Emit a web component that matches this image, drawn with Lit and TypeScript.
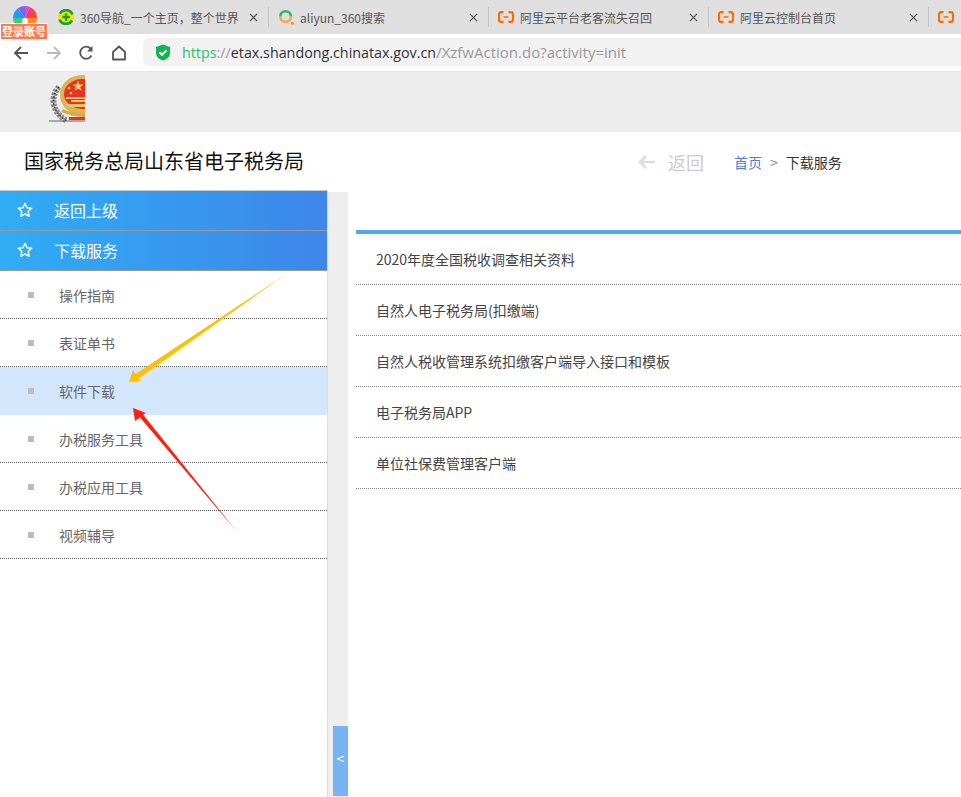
import { LitElement, html, css } from "lit";
import { customElement } from "lit/decorators.js";

const aliIcon = html`<svg class="fav" viewBox="0 0 16 16"><path d="M5.500 3.200H3.200C2 3.200 1 4.100 1 5.300v5.400c0 1.200 1 2.100 2.200 2.100h2.300M10.500 3.200h2.300c1.200 0 2.200.9 2.200 2.100v5.400c0 1.200-1 2.100-2.200 2.100h-2.300" fill="none" stroke="#ff6a00" stroke-width="2.200"/><path d="M5.500 8h5" stroke="#ff6a00" stroke-width="1.500"/></svg>`;
const closeIcon = html`<svg class="close" viewBox="0 0 10 10"><path d="M1 1l8 8M9 1L1 9" stroke="#555" stroke-width="1.400" fill="none"/></svg>`;
const star = html`<svg class="star" viewBox="0 0 16 16"><path d="M8 1.300l2 4.400 4.700.6-3.500 3.200.9 4.800L8 11.900l-4.100 2.400.9-4.800L1.300 6.300 6 5.700z" fill="none" stroke="#fff" stroke-width="1.400" stroke-linejoin="round"/></svg>`;

const tabs = [
  { icon: html`<svg class="fav" viewBox="0 0 16 16"><circle cx="8" cy="8" r="8" fill="#f7e200"/><path d="M2 4.500A7 7 0 0 1 14.500 5.500" fill="none" stroke="#12a048" stroke-width="2.600"/><path d="M14 11.500A7 7 0 0 1 1.500 10.500" fill="none" stroke="#12a048" stroke-width="2.600"/><path d="M8 4.200v7.600M4.200 8h7.600" stroke="#12a048" stroke-width="2.400"/></svg>`, text: "360导航_一个主页，整个世界" },
  { icon: html`<svg class="fav" viewBox="0 0 16 16"><path d="M2.300 7.500a5.300 5.300 0 0 1 10.600 0" fill="none" stroke="#2fb36a" stroke-width="2.600"/><path d="M12.900 7.500a5.300 5.300 0 0 1-10.600 0" fill="none" stroke="#f7a648" stroke-width="2.600"/><circle cx="14.300" cy="14.300" r="1.500" fill="#f58a1f"/></svg>`, text: "aliyun_360搜索" },
  { icon: aliIcon, text: "阿里云平台老客流失召回" },
  { icon: aliIcon, text: "阿里云控制台首页" },
  { icon: aliIcon, text: "" },
];

const menu = ["操作指南", "表证单书", "软件下载", "办税服务工具", "办税应用工具", "视频辅导"];
const links = ["2020年度全国税收调查相关资料", "自然人电子税务局(扣缴端)", "自然人税收管理系统扣缴客户端导入接口和模板", "电子税务局APP", "单位社保费管理客户端"];

@customElement("app-root")
export class AppRoot extends LitElement {
  static styles = css`
    :host { display: block; position: relative; width: 961px; height: 797px; overflow: hidden; background: #fff; font-family: "Noto Sans CJK SC", "Open Sans", sans-serif; }
    .strip { display: flex; height: 34px; background: #dfdfdf; padding-left: 48px; overflow: hidden; }
    .tab { flex: 0 0 220px; box-sizing: border-box; height: 34px; padding: 0 10px; display: flex; align-items: center; gap: 6px; font-size: 12px; color: #555; position: relative; }
    .tab + .tab::before { content: ""; position: absolute; left: 0; top: 7px; height: 20px; width: 1px; background: #c4c4c4; }
    .tab .label { flex: 1; white-space: nowrap; overflow: hidden; }
    .fav { width: 16px; height: 16px; flex: none; }
    .close { width: 9px; height: 9px; flex: none; }
    .bar { height: 37px; background: #fff; display: flex; align-items: center; border-bottom: 1px solid #e8e8e8; box-sizing: content-box; }
    .nav { display: flex; width: 143px; flex: none; box-sizing: border-box; padding-left: 13px; gap: 16.5px; }
    .nav svg { width: 16px; height: 16px; }
    .address { flex: 1; height: 28px; margin-top: -1px; background: #f2f2f2; border-radius: 6px 0 0 6px; display: flex; align-items: center; padding-left: 12px; gap: 11px; font: 15px/28px "Open Sans", sans-serif; white-space: nowrap; color: #999; }
    .address svg { width: 16px; height: 17px; }
    .scheme { color: #1fc26f; font-size: 14.3px; }
    .sep { color: #999; font-size: 14.3px; }
    .host-name { color: #333; font-size: 14.3px; }
    .logo-row { height: 60px; background: #ededed; display: flex; padding: 3px 0 0 49px; box-sizing: border-box; }
    .logo-row svg { width: 36px; height: 48px; }
    .title-row { height: 58px; display: flex; align-items: center; }
    .title { width: 637px; flex: none; box-sizing: border-box; padding: 0 0 2px 24px; font-size: 20px; color: #111; }
    .back { display: flex; align-items: center; gap: 13px; width: 97px; flex: none; font-size: 18px; color: #ccc; padding-top: 2px; box-sizing: border-box; }
    .back svg { width: 18px; height: 16px; }
    .crumbs { display: flex; font-size: 14px; gap: 8px; color: #333; padding-top: 2px; }
    .crumbs a { color: #4a7fdc; }
    .crumbs .gt { color: #888; }
    .main { display: flex; height: 607px; }
    .side { width: 328px; flex: none; box-sizing: border-box; border-right: 1px solid #ddd; }
    .head { height: 40px; display: flex; align-items: center; background: linear-gradient(90deg, #2fadf5, #3e86e8); color: #fff; font-size: 16px; padding: 0 0 2px 17px; gap: 21px; border-bottom: 1px solid #999; box-sizing: border-box; }
    .head:first-child { height: 41px; border-top: 1px solid #c6ccd6; }
    .star { width: 16px; height: 16px; flex: none; margin-top: 1px; }
    .item { height: 48px; box-sizing: border-box; display: flex; align-items: center; padding-left: 28px; gap: 25px; font-size: 14px; color: #666; border-bottom: 1px dotted #555; }
    .item.active { background: #d3e6fb; border-bottom: 0; }
    .bullet { width: 6px; height: 6px; background: #bdbdbd; flex: none; }
    .stripe { width: 20px; flex: none; background: #eee; margin-top: 2px; position: relative; }
    .toggle { position: absolute; left: 5px; right: 0; top: 534px; height: 70px; box-sizing: border-box; padding-bottom: 6px; background: #78b3f2; color: #fff; font-size: 14px; display: flex; align-items: center; justify-content: center; }
    .content { flex: 1; padding: 40px 0 0 8px; min-width: 0; }
    .list { border-top: 4px solid #4fa8f0; }
    .row { height: 51px; box-sizing: border-box; padding-left: 20px; display: flex; align-items: center; font-size: 14px; color: #444; border-bottom: 1px dotted #888; }
    .arrows { position: absolute; left: 0; top: 0; pointer-events: none; }
    .browser-logo { position: absolute; left: 13px; top: 6px; width: 24px; height: 24px; }
    .badge { position: absolute; left: 1px; top: 24px; width: 46px; height: 15px; box-sizing: border-box; background: #ff7a50; outline: 1px solid #fff; color: #fff; font-size: 11px; font-weight: 700; line-height: 15px; text-align: center; white-space: nowrap; }
  `;

  render() {
    return html`
      <div class="strip">
        ${tabs.map((t) => html`<div class="tab">${t.icon}<span class="label">${t.text}</span>${t.text ? closeIcon : ""}</div>`)}
      </div>
      <div class="bar">
        <div class="nav">
          <svg viewBox="0 0 16 16"><path d="M15 8H2M8 2L2 8l6 6" fill="none" stroke="#555" stroke-width="1.800"/></svg>
          <svg viewBox="0 0 16 16"><path d="M1 8h13M8 2l6 6-6 6" fill="none" stroke="#bbb" stroke-width="1.800"/></svg>
          <svg viewBox="0 0 16 16"><path d="M13.500 10.500A6 6 0 1 1 12.500 3.500" fill="none" stroke="#555" stroke-width="1.800"/><path d="M14.500 1v5.500H9z" fill="#555"/></svg>
          <svg viewBox="0 0 16 16"><path d="M2 14.500V7l6-5.500L14 7v7.500z" fill="none" stroke="#555" stroke-width="1.800" stroke-linejoin="round"/></svg>
        </div>
        <div class="address">
          <svg viewBox="0 0 16 17"><path d="M8 .5l7 2.500v6c0 4-3.200 6.500-7 7.500-3.800-1-7-3.500-7-7.500V3z" fill="#14b450"/><path d="M4.500 8.300l2.500 2.500 4.500-4.500" fill="none" stroke="#fff" stroke-width="2"/></svg>
          <span><span class="scheme">https</span><span class="sep">://</span><span class="host-name">etax.shandong.chinatax.gov.cn</span>/XzfwAction.do?activity=init</span>
        </div>
      </div>
      <div class="logo-row">
        <svg viewBox="0 0 36 48">
          <path d="M10 12C2 20 1 36 18 46" fill="none" stroke="#8a8a8a" stroke-width="6" stroke-dasharray="2.500 1.200"/>
          <path d="M10 12C2 20 1 36 18 46" fill="none" stroke="#2e2e2e" stroke-width="1.500" stroke-dasharray="1.500 2"/>
          <path d="M0 46h36" stroke="#666" stroke-width="1"/>
          <ellipse cx="33" cy="20" rx="22" ry="20" fill="#dcb552"/>
          <ellipse cx="33" cy="19" rx="18" ry="15" fill="#e8312a"/>
          <path d="M29 5.500l1.400 3.900h4.100l-3.300 2.500 1.200 3.900-3.400-2.400-3.400 2.400 1.200-3.900-3.300-2.500h4.100z" fill="#f8d860"/>
          <circle cx="20" cy="13" r="1.300" fill="#f8d860"/>
          <circle cx="22" cy="18" r="1.300" fill="#f8d860"/>
          <path d="M17 22h19v2H17zM22 25h14v2H22zM18 29h18v3H18z" fill="#ecc768"/>
          <path d="M14 34c6 3 14 4 22 4v4c-9 0-17-2-24-5z" fill="#d8ad48"/>
          <path d="M20 42h16v3H20z" fill="#e8312a"/>
        </svg>
      </div>
      <div class="title-row">
        <div class="title">国家税务总局山东省电子税务局</div>
        <div class="back">
          <svg viewBox="0 0 18 16"><path d="M18 8H3M9 2L3 8l6 6" fill="none" stroke="#ddd" stroke-width="2.600"/></svg>
          <span>返回</span>
        </div>
        <div class="crumbs"><a>首页</a><span class="gt">&gt;</span><span>下载服务</span></div>
      </div>
      <div class="main">
        <div class="side">
          <div class="head">${star}<span>返回上级</span></div>
          <div class="head">${star}<span>下载服务</span></div>
          ${menu.map((m, i) => html`<div class="item ${i === 2 ? "active" : ""}"><span class="bullet"></span><span>${m}</span></div>`)}
        </div>
        <div class="stripe"><div class="toggle">&lt;</div></div>
        <div class="content">
          <div class="list">${links.map((l) => html`<div class="row">${l}</div>`)}</div>
        </div>
      </div>
      <svg class="arrows" width="961" height="797" viewBox="0 0 961 797">
        <defs>
          <linearGradient id="y" gradientUnits="userSpaceOnUse" x1="289" y1="272" x2="240" y2="306"><stop offset="0" stop-color="#ffc000" stop-opacity=".7"/><stop offset="1" stop-color="#ffc000"/></linearGradient>
          <linearGradient id="r" gradientUnits="userSpaceOnUse" x1="238" y1="533" x2="222" y2="514"><stop offset="0" stop-color="#ff2010" stop-opacity=".6"/><stop offset="1" stop-color="#ff2010"/></linearGradient>
        </defs>
        <polygon points="289,272 138,379 142,381 129,382 133,370 135.500,374" fill="url(#y)"/>
        <polygon points="238,533 140,417.500 135,421 133,408 146,413 143,414.500" fill="url(#r)"/>
      </svg>
      <svg class="browser-logo" viewBox="0 0 24 24">
        <path d="M12 0a12 12 0 0 1 5 1.100L12 12z" fill="#d04ae0"/>
        <path d="M17 1.100A12 12 0 0 1 24 12H12z" fill="#ff3f4a"/>
        <path d="M24 12a12 12 0 0 1-6 10.400L12 12z" fill="#ff8a1f"/>
        <path d="M18 22.400a12 12 0 0 1-12 0L12 12z" fill="#5ccc46"/>
        <path d="M6 22.400A12 12 0 0 1 0 12h12z" fill="#34d07a"/>
        <path d="M0 12A12 12 0 0 1 5 2.300L12 12z" fill="#1f9bf5"/>
        <path d="M5 2.300A12 12 0 0 1 12 0v12z" fill="#8b5cf0"/>
        <circle cx="12" cy="15" r="3" fill="#fff"/>
      </svg>
      <div class="badge">登录账号</div>
    `;
  }
}
